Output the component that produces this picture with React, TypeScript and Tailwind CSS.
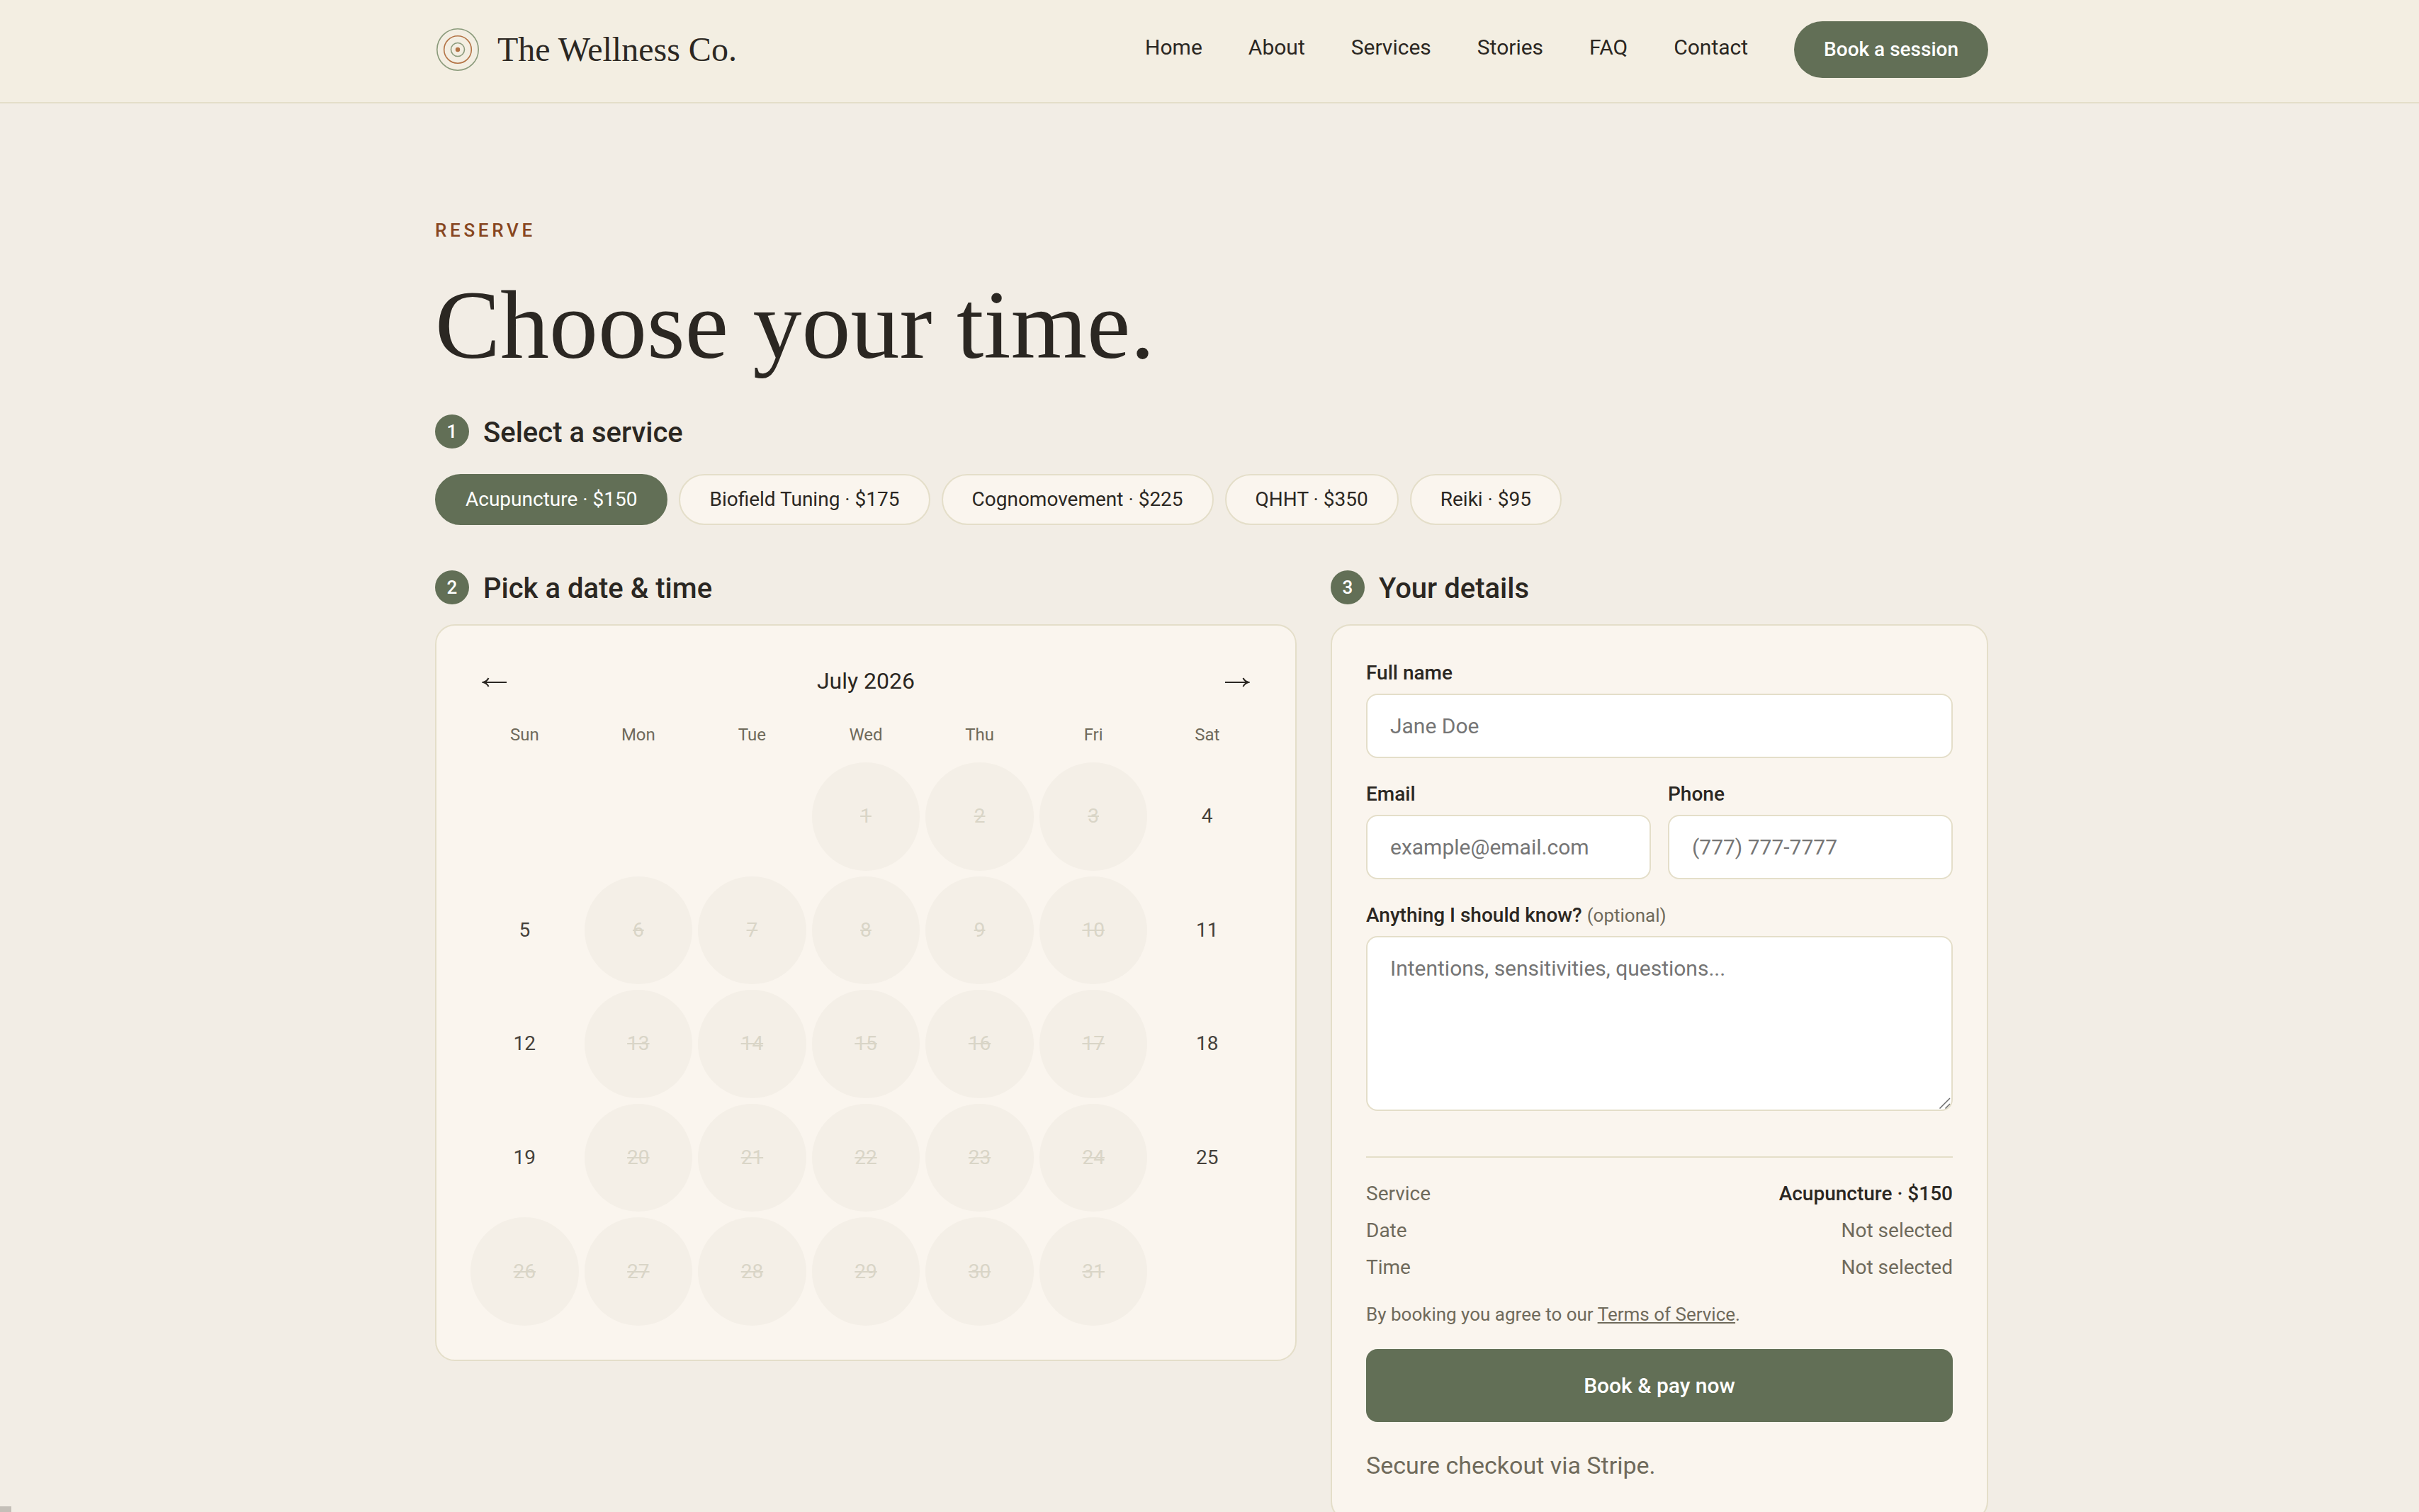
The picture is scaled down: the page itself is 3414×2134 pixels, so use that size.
/**
 * BookingPage: pick a service, pick a date, fill in the details and pay.
 */
import { useState } from 'react'
import clsx from 'clsx'

interface Service {
  id:    string
  name:  string
  price: number
}

const SERVICES: Service[] = [
  { id: 'acupuncture',   name: 'Acupuncture',     price: 150 },
  { id: 'biofield',      name: 'Biofield Tuning', price: 175 },
  { id: 'cognomovement', name: 'Cognomovement',   price: 225 },
  { id: 'qhht',          name: 'QHHT',            price: 350 },
  { id: 'reiki',         name: 'Reiki',           price: 95 },
]

const NAV_LINKS = ['Home', 'About', 'Services', 'Stories', 'FAQ', 'Contact']
const WEEKDAYS = ['Sun', 'Mon', 'Tue', 'Wed', 'Thu', 'Fri', 'Sat']

// July 2026 starts on a Wednesday
const MONTH_OFFSET = 3
const DAYS = Array.from({ length: 31 }, (_, i) => i + 1)
const OPEN_DAYS = new Set([4, 5, 11, 12, 18, 19, 25])

const label = (s: Service) => `${s.name} · $${s.price}`

const LABEL = 'mb-2.5 block leading-[38px] font-medium'
const FIELD =
  'block w-full rounded-2xl border-2 border-[#e4dec9] bg-white px-8 text-[30px] text-[#2b2722] placeholder:text-[#757575] outline-none focus:border-[#626f56]'

function Logo() {
  return (
    <svg width="64" height="64" viewBox="0 0 64 64" fill="none" aria-hidden="true">
      <circle cx="32" cy="32" r="29.2" stroke="#8a9a7b" strokeWidth="1.6" />
      <circle cx="32" cy="32" r="19.3" stroke="#b37345" strokeWidth="1.6" />
      <circle cx="32" cy="32" r="9.5" stroke="#8a9a7b" strokeWidth="1.6" />
      <circle cx="32" cy="32" r="3.2" fill="#b37345" />
    </svg>
  )
}

function Arrow({ flip = false }: { flip?: boolean }) {
  return (
    <svg
      width="36"
      height="16"
      viewBox="0 0 36 16"
      fill="none"
      stroke="#2b2722"
      strokeWidth="2"
      className={clsx(flip && 'rotate-180')}
      aria-hidden="true"
    >
      <path d="M2.5 8H35" />
      <path d="M9.5 2C8.3 4.6 5.6 7 2 8c3.6 1 6.3 3.4 7.5 6" />
      <path d="M1 8l6-3v6z" fill="#2b2722" stroke="none" />
    </svg>
  )
}

function StepHeading({ step, children }: { step: number; children: string }) {
  return (
    <h2 className="flex h-12 items-center gap-5 text-[40px] leading-[48px] font-medium">
      <span className="flex size-12 items-center justify-center rounded-full bg-[#626f56] text-[26px] font-medium text-white">
        {step}
      </span>
      <span className="pt-1">{children}</span>
    </h2>
  )
}

function Header() {
  return (
    <header className="border-b-2 border-[#e4dec9] bg-[#f3eee2] pt-[30px] pb-[34px] pl-1.5">
      <div className="mx-auto flex max-w-[2192px] items-center justify-between">
        <a href="#home" className="flex items-center gap-6 font-['Liberation_Serif',serif] text-[48px] leading-[64px]">
          <Logo />
          The Wellness Co.
        </a>
        <nav className="flex items-center gap-[65px]">
          {NAV_LINKS.map((link) => (
            <a key={link} href={`#${link.toLowerCase()}`} className="pb-1.5 text-[30px] leading-[40px]">
              {link}
            </a>
          ))}
          <a
            href="#book"
            className="rounded-full bg-[#626f56] px-[42px] text-[28px] leading-[80px] font-medium text-white"
          >
            Book a session
          </a>
        </nav>
      </div>
    </header>
  )
}

interface CalendarProps {
  selected: number | null
  onSelect: (day: number) => void
}

function Calendar({ selected, onSelect }: CalendarProps) {
  return (
    <div className="rounded-[28px] border-2 border-[#e4dec9] bg-[#faf5ee] p-12">
      <div className="flex h-[60px] items-center justify-between">
        <button type="button" aria-label="Previous month" className="px-4 pt-1">
          <Arrow />
        </button>
        <span className="text-[32px]">July 2026</span>
        <button type="button" aria-label="Next month" className="px-4 pt-1">
          <Arrow flip />
        </button>
      </div>

      <div className="mt-7 mb-[21px] grid grid-cols-7 gap-2 text-center text-[24px] leading-[36px] text-[#6f6a5b]">
        {WEEKDAYS.map((day) => (
          <span key={day}>{day}</span>
        ))}
      </div>

      <div className="grid grid-cols-7 gap-2 text-[28px]">
        {Array.from({ length: MONTH_OFFSET }, (_, i) => (
          <span key={`blank-${i}`} />
        ))}
        {DAYS.map((day) => {
          const open = OPEN_DAYS.has(day)
          return (
            <button
              key={day}
              type="button"
              disabled={!open}
              onClick={() => onSelect(day)}
              className={clsx(
                'aspect-square rounded-full',
                !open && 'bg-[#f4efe7] text-[#d9d5c7] line-through',
                open && selected !== day && 'text-[#45413b]',
                open && selected === day && 'bg-[#626f56] text-white',
              )}
            >
              {day}
            </button>
          )
        })}
      </div>
    </div>
  )
}

function SummaryRow({ name, value, strong = false }: { name: string; value: string; strong?: boolean }) {
  return (
    <div className="flex justify-between">
      <dt>{name}</dt>
      <dd className={clsx(strong && 'font-medium text-[#2b2722]')}>{value}</dd>
    </div>
  )
}

function DetailsForm({ service, day }: { service: Service; day: number | null }) {
  return (
    <form
      className="rounded-[28px] border-2 border-[#e4dec9] bg-[#faf5ee] p-12"
      onSubmit={(e) => e.preventDefault()}
    >
      <div className="flex flex-col gap-8 text-[28px]">
        <div>
          <label htmlFor="name" className={LABEL}>Full name</label>
          <input id="name" type="text" placeholder="Jane Doe" className={clsx(FIELD, 'h-[91px]')} />
        </div>
        <div className="grid grid-cols-2 gap-6">
          <div>
            <label htmlFor="email" className={LABEL}>Email</label>
            <input id="email" type="email" placeholder="example@email.com" className={clsx(FIELD, 'h-[91px]')} />
          </div>
          <div>
            <label htmlFor="phone" className={LABEL}>Phone</label>
            <input id="phone" type="tel" placeholder="(777) 777-7777" className={clsx(FIELD, 'h-[91px]')} />
          </div>
        </div>
        <div>
          <label htmlFor="notes" className={LABEL}>
            Anything I should know?{' '}
            <span className="text-[26px] font-normal text-[#6f6a5b]">(optional)</span>
          </label>
          <div className="relative">
            <textarea
              id="notes"
              placeholder="Intentions, sensitivities, questions..."
              className={clsx(FIELD, 'h-[247px] resize-none py-5 leading-[48px]')}
            />
            <svg
              width="18"
              height="18"
              viewBox="0 0 18 18"
              stroke="#6b6b6b"
              strokeWidth="1.5"
              className="pointer-events-none absolute right-0.5 bottom-0.5"
              aria-hidden="true"
            >
              <path d="M1.5 16.5L16 2M9.5 16.5L16 10" />
            </svg>
          </div>
        </div>
      </div>

      <dl className="mt-16 flex flex-col gap-2 border-t-2 border-[#e4dec9] pt-[29px] text-[28px] leading-[44px] text-[#6f6a5b]">
        <SummaryRow name="Service" value={label(service)} strong />
        <SummaryRow name="Date" value={day ? `July ${day}, 2026` : 'Not selected'} />
        <SummaryRow name="Time" value="Not selected" />
      </dl>

      <p className="mt-[23px] text-[26px] leading-[42px] text-[#6f6a5b]">
        By booking you agree to our{' '}
        <a href="#terms" className="underline">Terms of Service</a>.
      </p>
      <button
        type="submit"
        className="mt-7 h-[103px] w-full rounded-2xl bg-[#626f56] text-[30px] font-medium text-white"
      >
        Book &amp; pay now
      </button>
      <p className="mt-8 text-[34px] leading-[58px] text-[#6f6a5b]">Secure checkout via Stripe.</p>
    </form>
  )
}

export default function App() {
  const [serviceId, setServiceId] = useState('acupuncture')
  const [day, setDay] = useState<number | null>(null)
  const service = SERVICES.find((s) => s.id === serviceId) ?? SERVICES[0]

  return (
    <div className="min-h-screen bg-[#f2ede5] font-['Roboto',sans-serif] text-[#2b2722]">
      <Header />

      <main className="pt-40 pb-20 pl-1.5">
        <div className="mx-auto max-w-[2192px]">
          <p className="text-[26px] leading-[38px] font-medium tracking-[0.18em] text-[#874620] uppercase">Reserve</p>
          <h1 className="mt-10 mb-[51px] font-['Liberation_Serif',serif] text-[138px] leading-[150px]">
            Choose your time.
          </h1>

          <StepHeading step={1}>Select a service</StepHeading>
          <div className="mt-9 flex flex-wrap gap-4">
            {SERVICES.map((s) => (
              <button
                key={s.id}
                type="button"
                onClick={() => setServiceId(s.id)}
                className={clsx(
                  'rounded-full border-2 px-[41px] text-[28px] leading-[68px]',
                  s.id === serviceId
                    ? 'border-[#626f56] bg-[#626f56] text-white'
                    : 'border-[#e4dec9] bg-[#faf5ee]',
                )}
              >
                {label(s)}
              </button>
            ))}
          </div>

          <div className="mt-16 grid grid-cols-[38fr_29fr] items-start gap-12">
            <section className="flex flex-col gap-7">
              <StepHeading step={2}>Pick a date &amp; time</StepHeading>
              <Calendar selected={day} onSelect={setDay} />
            </section>
            <section className="flex flex-col gap-7">
              <StepHeading step={3}>Your details</StepHeading>
              <DetailsForm service={service} day={day} />
            </section>
          </div>
        </div>
      </main>

      <div className="fixed bottom-0 left-0 h-2 w-4 bg-[#c4bfb8]" />
    </div>
  )
}
